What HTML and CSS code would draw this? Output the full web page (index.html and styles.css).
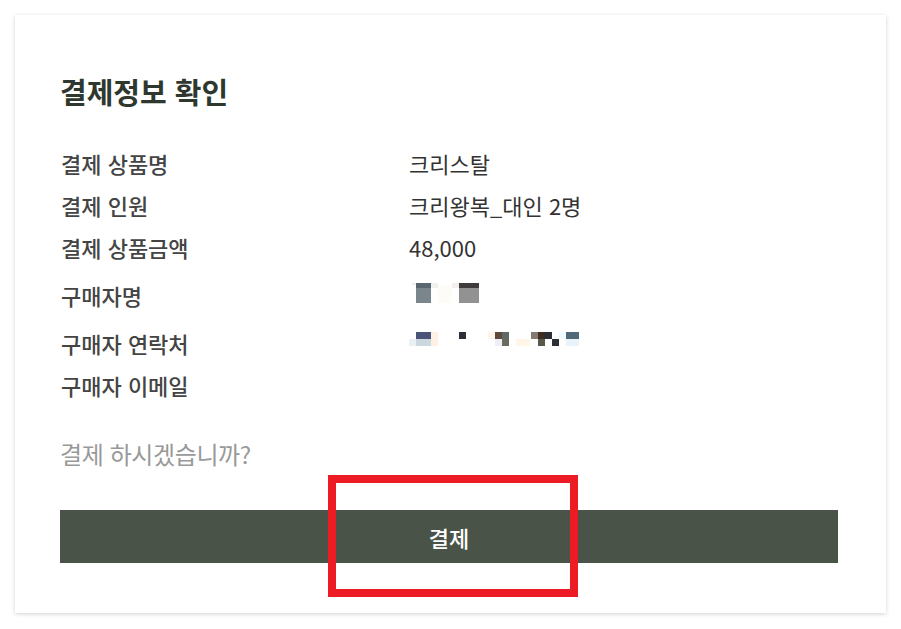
FILE: index.html
```html
<!DOCTYPE html>
<html lang="ko">
<head>
<meta charset="utf-8">
<link rel="stylesheet" href="styles.css">
</head>
<body>
<div class="card">
  <h1 class="title">결제정보 확인</h1>
  <div class="rows">
    <div class="row"><span class="label">결제 상품명</span><span class="value">크리스탈</span></div>
    <div class="row"><span class="label">결제 인원</span><span class="value">크리왕복_대인 2명</span></div>
    <div class="row"><span class="label">결제 상품금액</span><span class="value">48,000</span></div>
    <div class="row tall"><span class="label">구매자명</span><span class="value">
      <svg class="mosaic" width="70" height="24" viewBox="0 0 70 24">
        <rect x="3" y="0" width="4" height="2" fill="#eeeeee"/>
        <rect x="7" y="0" width="15" height="5" fill="#5a6670"/>
        <rect x="7" y="5" width="15" height="15" fill="#7a868c"/>
        <rect x="22" y="0" width="7" height="5" fill="#f0f0f0"/>
        <rect x="29" y="2" width="14" height="18" fill="#fdfcf6"/>
        <rect x="43" y="0" width="7" height="5" fill="#f2eeee"/>
        <rect x="50" y="0" width="22" height="5" fill="#3f3a3c"/>
        <rect x="50" y="5" width="22" height="15" fill="#929292"/>
      </svg>
    </span></div>
    <div class="row"><span class="label">구매자 연락처</span><span class="value">
      <svg class="mosaic" width="170" height="22" viewBox="0 0 170 22">
        <rect x="0" y="7" width="7" height="7" fill="#e8f0f4"/>
        <rect x="7" y="0" width="15" height="7" fill="#4a5478"/>
        <rect x="7" y="7" width="15" height="7" fill="#ccd8e0"/>
        <rect x="22" y="0" width="7" height="14" fill="#fff0e4"/>
        <rect x="50" y="0" width="7" height="7" fill="#2a3035"/>
        <rect x="79" y="0" width="7" height="7" fill="#fff4e8"/>
        <rect x="86" y="0" width="7" height="7" fill="#5e4a3c"/>
        <rect x="93" y="0" width="7" height="7" fill="#606868"/>
        <rect x="86" y="7" width="7" height="7" fill="#eeeef8"/>
        <rect x="93" y="7" width="7" height="7" fill="#6a6a60"/>
        <rect x="107" y="7" width="14" height="7" fill="#fff6e8"/>
        <rect x="122" y="0" width="7" height="7" fill="#857a72"/>
        <rect x="129" y="0" width="7" height="7" fill="#3f2e20"/>
        <rect x="129" y="7" width="7" height="7" fill="#5a5848"/>
        <rect x="136" y="0" width="7" height="7" fill="#2a3035"/>
        <rect x="143" y="7" width="7" height="7" fill="#2a3035"/>
        <rect x="150" y="0" width="7" height="7" fill="#f0faff"/>
        <rect x="157" y="0" width="15" height="7" fill="#506878"/>
        <rect x="157" y="7" width="15" height="7" fill="#e8f4fa"/>
      </svg>
    </span></div>
    <div class="row"><span class="label">구매자 이메일</span><span class="value"></span></div>
  </div>
  <p class="question">결제 하시겠습니까?</p>
  <div class="btn-wrap">
    <button class="pay-btn">결제</button>
    <div class="highlight"></div>
  </div>
</div>
</body>
</html>
```

FILE: styles.css
```css
* { box-sizing: border-box; }
html, body { margin: 0; padding: 0; background: #ffffff; }
body {
  padding: 15px 15px 16px 15px;
  font-family: "Noto Sans CJK KR", "Noto Sans", sans-serif;
}
.card {
  width: 871px;
  height: 598px;
  background: #ffffff;
  box-shadow: 0 1px 4px rgba(0,0,0,0.18);
  padding: 56px 48px 0 45px;
}
.title {
  margin: 0;
  font-size: 29px;
  font-weight: 700;
  line-height: 40px;
  color: #2f382f;
}
.rows {
  margin-top: 31px;
}
.row {
  display: flex;
  height: 42px;
  align-items: center;
}
.row.tall { height: 54px; }
.label {
  width: 349px;
  padding-left: 1px;
  font-size: 22px;
  font-weight: 500;
  color: #444444;
}
.value {
  display: flex;
  align-items: center;
  font-size: 22px;
  font-weight: 400;
  color: #333333;
}
.mosaic { display: block; }
.question {
  margin: 27px 0 0 0;
  line-height: 42px;
  font-size: 24px;
  font-weight: 400;
  color: #999999;
  letter-spacing: -0.4px;
}
.btn-wrap {
  position: relative;
  margin-top: 35px;
}
.pay-btn {
  display: block;
  width: 778px;
  height: 53px;
  border: 0;
  background: #495347;
  color: #ffffff;
  font-family: "Noto Sans CJK KR", "Noto Sans", sans-serif;
  font-size: 22px;
  font-weight: 500;
  padding: 0;
}
.highlight {
  position: absolute;
  left: 268px;
  top: -35px;
  width: 250px;
  height: 122px;
  border: 8px solid #ed1c24;
}
```
